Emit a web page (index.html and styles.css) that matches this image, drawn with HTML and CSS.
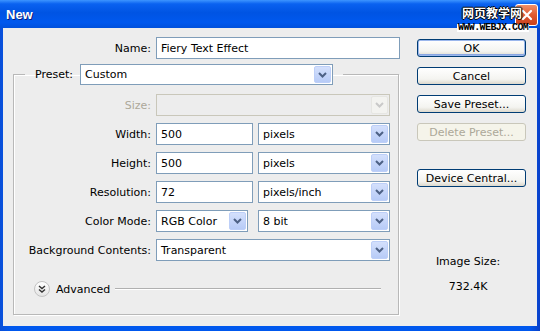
FILE: index.html
```html
<!DOCTYPE html>
<html lang="en">
<head>
    <meta charset="UTF-8">
    <meta name="viewport" content="width=device-width, initial-scale=1.0">
    <title>New</title>
    <link rel="stylesheet" href="styles.css">
</head>
<body>

    <div class="window">
        <div class="titlebar">
            <span class="title">New</span>
            <span class="close">
                <svg width="12" height="12" viewBox="0 0 12 12"><path d="M2 2 L10 10 M10 2 L2 10" stroke="#fff" stroke-width="2.2" stroke-linecap="round"/></svg>
            </span>
            <span class="brand-cn">网页教学网</span>
            <span class="brand-url">WWW.WEBJX.COM</span>
        </div>

        <div class="client">
            <div class="main">
                <div class="name-row">
                    <label class="lbl">Name:</label>
                    <div class="field">Fiery Text Effect</div>
                </div>

                <fieldset class="preset">
                    <legend>
                        <span class="legend-lbl">Preset:</span>
                        <div class="select preset-select">
                            <span class="value">Custom</span>
                            <span class="arrow"><svg width="9" height="6" viewBox="0 0 9 6"><polyline points="1,1 4.5,4.5 8,1" fill="none" stroke="#4d6185" stroke-width="2"/></svg></span>
                        </div>
                    </legend>

                    <div class="rows">
                        <label class="lbl disabled">Size:</label>
                        <div class="select off">
                            <span class="value"></span>
                            <span class="arrow"><svg width="9" height="6" viewBox="0 0 9 6"><polyline points="1,1 4.5,4.5 8,1" fill="none" stroke="#c9c9c9" stroke-width="2"/></svg></span>
                        </div>

                        <label class="lbl">Width:</label>
                        <div class="pair">
                            <div class="field w97">500</div>
                            <div class="select w132">
                                <span class="value">pixels</span>
                                <span class="arrow"><svg width="9" height="6" viewBox="0 0 9 6"><polyline points="1,1 4.5,4.5 8,1" fill="none" stroke="#4d6185" stroke-width="2"/></svg></span>
                            </div>
                        </div>

                        <label class="lbl">Height:</label>
                        <div class="pair">
                            <div class="field w97">500</div>
                            <div class="select w132">
                                <span class="value">pixels</span>
                                <span class="arrow"><svg width="9" height="6" viewBox="0 0 9 6"><polyline points="1,1 4.5,4.5 8,1" fill="none" stroke="#4d6185" stroke-width="2"/></svg></span>
                            </div>
                        </div>

                        <label class="lbl">Resolution:</label>
                        <div class="pair">
                            <div class="field w97">72</div>
                            <div class="select w132">
                                <span class="value">pixels/inch</span>
                                <span class="arrow"><svg width="9" height="6" viewBox="0 0 9 6"><polyline points="1,1 4.5,4.5 8,1" fill="none" stroke="#4d6185" stroke-width="2"/></svg></span>
                            </div>
                        </div>

                        <label class="lbl">Color Mode:</label>
                        <div class="pair">
                            <div class="select w92">
                                <span class="value">RGB Color</span>
                                <span class="arrow"><svg width="9" height="6" viewBox="0 0 9 6"><polyline points="1,1 4.5,4.5 8,1" fill="none" stroke="#4d6185" stroke-width="2"/></svg></span>
                            </div>
                            <div class="select w132">
                                <span class="value">8 bit</span>
                                <span class="arrow"><svg width="9" height="6" viewBox="0 0 9 6"><polyline points="1,1 4.5,4.5 8,1" fill="none" stroke="#4d6185" stroke-width="2"/></svg></span>
                            </div>
                        </div>

                        <label class="lbl">Background Contents:</label>
                        <div class="select">
                            <span class="value">Transparent</span>
                            <span class="arrow"><svg width="9" height="6" viewBox="0 0 9 6"><polyline points="1,1 4.5,4.5 8,1" fill="none" stroke="#4d6185" stroke-width="2"/></svg></span>
                        </div>
                    </div>

                    <div class="advanced">
                        <span class="adv-icon">
                            <svg width="8" height="8" viewBox="0 0 8 8"><polyline points="1,1 4,3.5 7,1" fill="none" stroke="#333" stroke-width="1.4"/><polyline points="1,4.5 4,7 7,4.5" fill="none" stroke="#333" stroke-width="1.4"/></svg>
                        </span>
                        <span class="adv-text">Advanced</span>
                        <span class="adv-line"></span>
                    </div>
                </fieldset>
            </div>

            <div class="side">
                <button class="btn default">OK</button>
                <button class="btn">Cancel</button>
                <button class="btn">Save Preset...</button>
                <button class="btn" disabled>Delete Preset...</button>
                <button class="btn device">Device Central...</button>
                <div class="info">
                    <div>Image Size:</div>
                    <div class="size">732.4K</div>
                </div>
            </div>
        </div>
    </div>

</body>
</html>
```

FILE: styles.css
```css
body {
    margin: 0;
    font-family: "DejaVu Sans", Tahoma, sans-serif;
    font-size: 11px;
    color: #000;
}
.window {
    width: 540px;
    height: 331px;
    display: flex;
    flex-direction: column;
    background: linear-gradient(to right, #0a4fd8, #0058ee 2%, #0058ee 98%, #0a40c8);
    box-sizing: border-box;
    overflow: hidden;
}
.titlebar {
    flex: none;
    height: 28px;
    position: relative;
    display: flex;
    align-items: center;
    padding-left: 6px;
    background: linear-gradient(to bottom, #3d95ff 0%, #0a62f0 14%, #0054e3 45%, #0058ee 80%, #0050dc 100%);
}
.title {
    font-family: "Liberation Sans", Arial, sans-serif;
    font-weight: bold;
    font-size: 13px;
    color: #fff;
    text-shadow: 1px 1px 0 #0a1e7a;
}
.close {
    position: absolute;
    left: 515px;
    top: 4px;
    width: 21px;
    height: 20px;
    border: 1px solid #fff;
    border-radius: 3px;
    background: linear-gradient(to bottom, #f0906a, #e05a30 50%, #c8401c);
    display: flex;
    align-items: center;
    justify-content: center;
}
.brand-cn {
    position: absolute;
    left: 462px;
    top: 5px;
    font-family: "Noto Sans CJK SC", sans-serif;
    font-weight: bold;
    font-size: 12px;
    line-height: 16px;
    color: #fff;
    text-shadow: 1px 0 0 #000, -1px 0 0 #000, 0 1px 0 #000, 0 -1px 0 #000;
}
.brand-url {
    position: absolute;
    left: 457px;
    top: 24px;
    z-index: 2;
    font-family: "Liberation Mono", monospace;
    font-weight: bold;
    font-size: 10px;
    letter-spacing: -0.6px;
    line-height: 8px;
    padding: 0 1px;
    background: #fff;
    color: #000;
}
.client {
    flex: 1;
    margin: 0 3px 5px 3px;
    background: #ededed;
    display: flex;
}
.main {
    width: 400px;
}
.lbl {
    text-align: right;
    white-space: nowrap;
}
.lbl.disabled {
    color: #aca899;
}
.name-row {
    display: grid;
    grid-template-columns: 148px 244px;
    column-gap: 5px;
    align-items: center;
    padding-top: 9px;
}
.field {
    height: 22px;
    box-sizing: border-box;
    border: 1px solid #7f9db9;
    background: #fff;
    padding-left: 4px;
    display: flex;
    align-items: center;
}
.select {
    height: 22px;
    box-sizing: border-box;
    border: 1px solid #7f9db9;
    background: #fff;
    display: flex;
    align-items: center;
}
.select .value {
    flex: 1;
    padding-left: 4px;
    white-space: nowrap;
}
.select .arrow {
    width: 17px;
    height: 18px;
    margin-right: 1px;
    box-sizing: border-box;
    border: 1px solid #bdcff8;
    border-radius: 2px;
    background: linear-gradient(to bottom, #d4e0fc, #b7cbf7);
    display: flex;
    align-items: center;
    justify-content: center;
}
.select.off {
    border-color: #c9c7ba;
    background: #ededed;
}
.select.off .arrow {
    border-color: #e6e6e2;
    background: #f3f3f0;
}
.preset {
    margin: 5px 0 0 10px;
    width: 386px;
    box-sizing: border-box;
    padding: 14px 8px 17px 0;
    border: 1px solid #b8b8b8;
    box-shadow: 1px 1px 0 #fff, inset 1px 1px 0 #fff;
}
.preset legend {
    margin: 0 0 -5px 11px;
    padding: 0 10px;
    display: flex;
    align-items: center;
}
.legend-lbl {
    width: 40px;
    margin-right: 5px;
}
.preset-select {
    width: 253px;
    height: 21px;
}
.preset-select .arrow {
    height: 17px;
}
.rows {
    display: grid;
    grid-template-columns: 137px 234px;
    column-gap: 5px;
    row-gap: 7px;
    align-items: center;
}
.pair {
    display: flex;
    justify-content: space-between;
}
.w97 { width: 97px; }
.w92 { width: 92px; }
.w132 { width: 132px; }
.advanced {
    display: flex;
    align-items: center;
    margin-top: 20px;
    padding-left: 20px;
}
.adv-icon {
    width: 16px;
    height: 16px;
    box-sizing: border-box;
    border: 1px solid #c2c2c2;
    border-radius: 50%;
    background: linear-gradient(to bottom, #ffffff, #e4e4e4);
    display: flex;
    align-items: center;
    justify-content: center;
}
.adv-text {
    margin-left: 6px;
}
.adv-line {
    flex: 1;
    margin: 0 9px 0 5px;
    border-top: 1px solid #b0b0b0;
    border-bottom: 1px solid #fff;
}
.side {
    width: 109px;
    margin-left: 14px;
    padding-top: 11px;
    display: flex;
    flex-direction: column;
}
.btn {
    height: 18px;
    margin: 0 0 10px 0;
    padding: 0;
    box-sizing: border-box;
    border: 1px solid #003c74;
    border-radius: 3px;
    background: linear-gradient(to bottom, #ffffff, #f4f4f0 70%, #dcd8cc);
    font: inherit;
    color: #000;
}
.btn.default {
    box-shadow: inset 0 0 0 1px #9bb7ec, inset 0 -1px 0 1px #89a6e2;
}
.btn:disabled {
    border-color: #c9c7ba;
    background: #f5f4ea;
    color: #aca899;
}
.btn.device {
    margin-top: 18px;
}
.info {
    margin-top: 58px;
    padding-right: 7px;
    text-align: center;
    line-height: 13px;
}
.info .size {
    margin-top: 12px;
}
```
